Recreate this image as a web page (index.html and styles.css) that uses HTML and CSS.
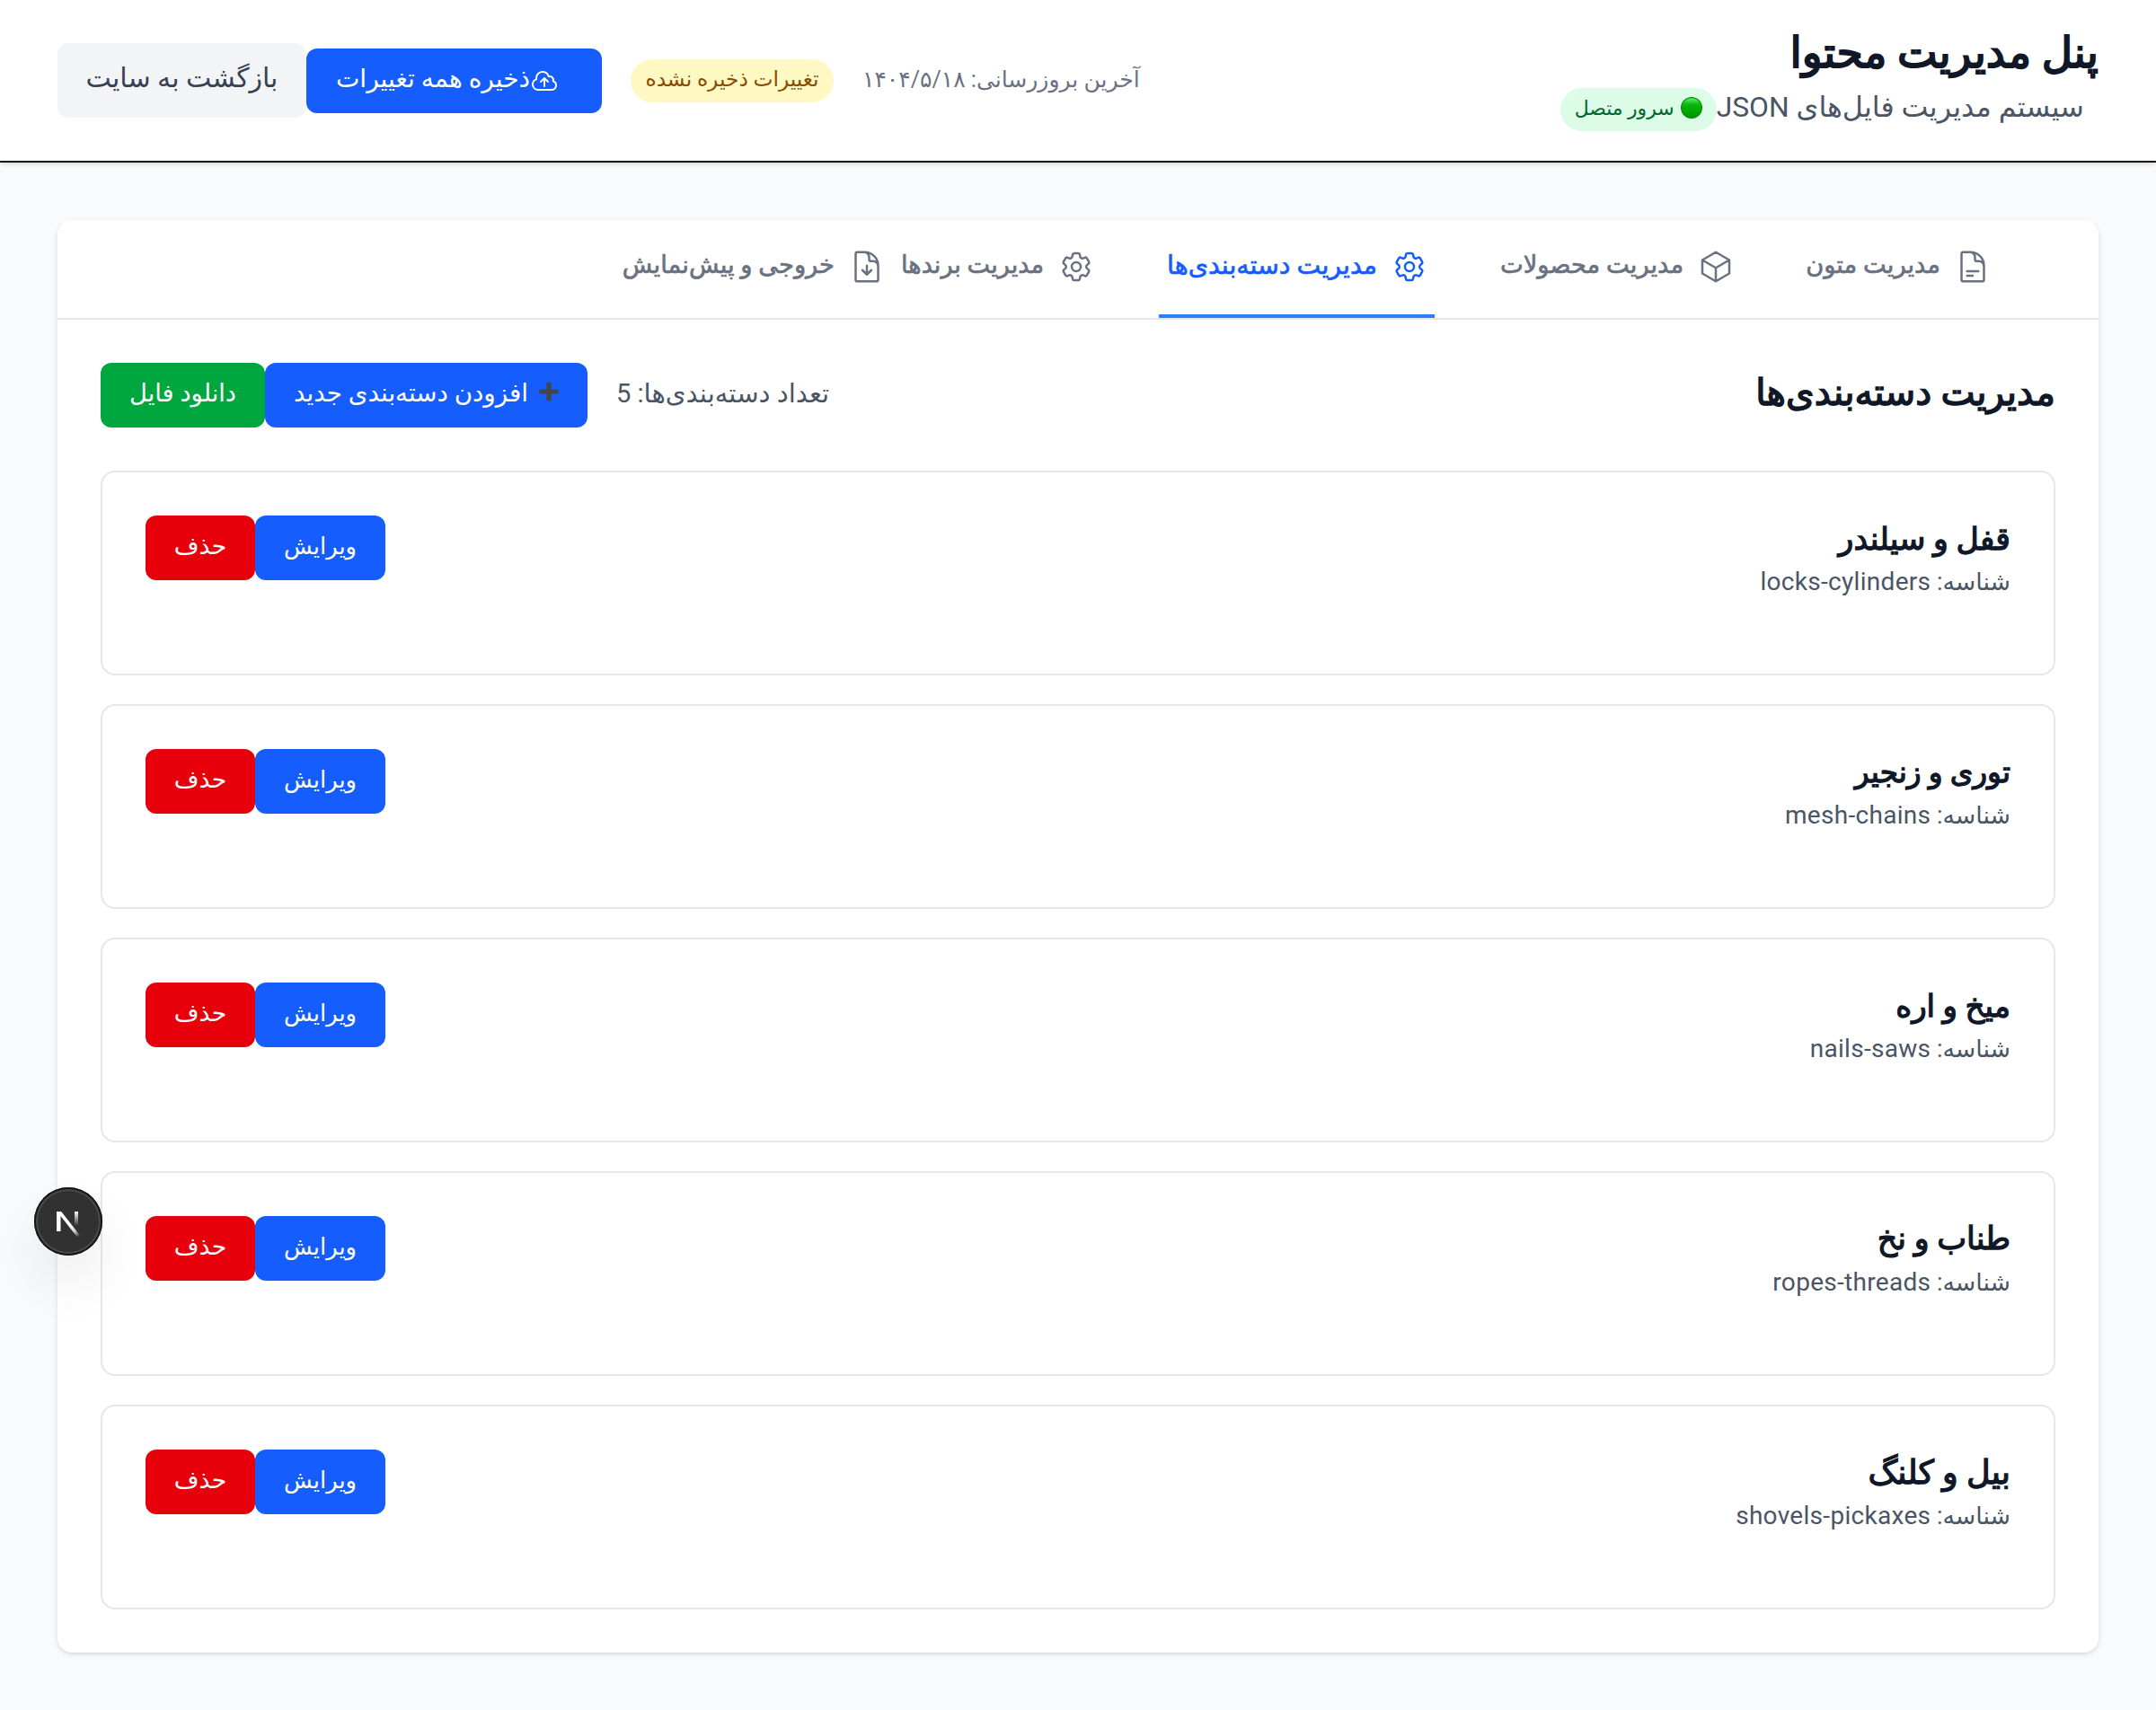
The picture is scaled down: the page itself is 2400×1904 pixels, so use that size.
FILE: index.html
```html
<!DOCTYPE html>
<html lang="fa" dir="rtl">
<head>
<meta charset="utf-8">
<title>پنل مدیریت محتوا</title>
<link rel="stylesheet" href="styles.css">
</head>
<body>
<svg class="sprite" aria-hidden="true">
  <symbol id="i-doc" viewBox="0 0 24 24"><path d="M19.5 14.25v-2.625a3.375 3.375 0 0 0-3.375-3.375h-1.5A1.125 1.125 0 0 1 13.5 7.125v-1.5a3.375 3.375 0 0 0-3.375-3.375H8.25m0 12.75h7.5m-7.5 3H12M10.5 2.25H5.625c-.621 0-1.125.504-1.125 1.125v17.25c0 .621.504 1.125 1.125 1.125h12.75c.621 0 1.125-.504 1.125-1.125V11.25a9 9 0 0 0-9-9Z"/></symbol>
  <symbol id="i-cube" viewBox="0 0 24 24"><path d="m21 7.5-9-5.25L3 7.5m18 0-9 5.25m9-5.25v9l-9 5.25M3 7.5l9 5.25M3 7.5v9l9 5.25m0-9v9"/></symbol>
  <symbol id="i-cog" viewBox="0 0 24 24"><path d="M9.594 3.94c.09-.542.56-.94 1.11-.94h2.593c.55 0 1.02.398 1.11.94l.213 1.281c.063.374.313.686.645.87.074.04.147.083.22.127.325.196.72.257 1.075.124l1.217-.456a1.125 1.125 0 0 1 1.37.49l1.296 2.247a1.125 1.125 0 0 1-.26 1.431l-1.003.827c-.293.241-.438.613-.43.992a7.723 7.723 0 0 1 0 .255c-.008.378.137.75.43.991l1.004.827c.424.35.534.955.26 1.43l-1.298 2.247a1.125 1.125 0 0 1-1.369.491l-1.217-.456c-.355-.133-.75-.072-1.076.124a6.47 6.47 0 0 1-.22.128c-.331.183-.581.495-.644.869l-.213 1.281c-.09.543-.56.94-1.11.94h-2.594c-.55 0-1.019-.398-1.11-.94l-.213-1.281c-.062-.374-.312-.686-.644-.87a6.52 6.52 0 0 1-.22-.127c-.325-.196-.72-.257-1.076-.124l-1.217.456a1.125 1.125 0 0 1-1.369-.49l-1.297-2.247a1.125 1.125 0 0 1 .26-1.431l1.004-.827c.292-.24.437-.613.43-.991a6.932 6.932 0 0 1 0-.255c.007-.38-.138-.751-.43-.992l-1.004-.827a1.125 1.125 0 0 1-.26-1.43l1.297-2.247a1.125 1.125 0 0 1 1.37-.491l1.216.456c.356.133.751.072 1.076-.124.072-.044.146-.086.22-.128.332-.183.582-.495.644-.869l.214-1.28Z"/><path d="M15 12a3 3 0 1 1-6 0 3 3 0 0 1 6 0Z"/></symbol>
  <symbol id="i-export" viewBox="0 0 24 24"><path d="M19.5 14.25v-2.625a3.375 3.375 0 0 0-3.375-3.375h-1.5A1.125 1.125 0 0 1 13.5 7.125v-1.5a3.375 3.375 0 0 0-3.375-3.375H8.25m.75 12 3 3m0 0 3-3m-3 3v-6m-1.5-9H5.625c-.621 0-1.125.504-1.125 1.125v17.25c0 .621.504 1.125 1.125 1.125h12.75c.621 0 1.125-.504 1.125-1.125V11.25a9 9 0 0 0-9-9Z"/></symbol>
  <symbol id="i-cloud" viewBox="0 0 24 24"><path d="M12 16.5V9.75m0 0 3 3m-3-3-3 3M6.75 19.5a4.5 4.5 0 0 1-1.41-8.775 5.25 5.25 0 0 1 10.233-2.33 3 3 0 0 1 3.758 3.848A3.752 3.752 0 0 1 18 19.5H6.75Z"/></symbol>
</svg>

<header class="topbar">
  <div class="brand">
    <h1 class="brand-title">پنل مدیریت محتوا</h1>
    <div class="brand-row">
      <p class="brand-sub">سیستم مدیریت فایل‌های JSON</p>
      <span class="badge badge-ok"><svg class="status-dot" viewBox="0 0 24 24" role="img" aria-label="متصل"><defs><linearGradient id="dot" x1="0" y1="0" x2="0" y2="1"><stop offset="0" stop-color="#5f6"/><stop offset=".35" stop-color="#0db40d"/><stop offset=".65" stop-color="#00aa00"/><stop offset="1" stop-color="#009400"/></linearGradient></defs><circle cx="12" cy="12" r="11.4" fill="url(#dot)" stroke="#078a0c" stroke-width="1.2"/></svg><span>سرور متصل</span></span>
    </div>
  </div>
  <div class="actions">
    <span class="updated">آخرین بروزرسانی: ۱۴۰۴/۵/۱۸</span>
    <span class="badge badge-warn">تغییرات ذخیره نشده</span>
    <div class="buttons">
      <button class="btn btn-blue btn-save"><svg class="icon"><use href="#i-cloud"/></svg><span>ذخیره همه تغییرات</span></button>
      <a class="btn btn-back">بازگشت به سایت</a>
    </div>
  </div>
</header>

<main class="panel">
  <nav class="tabs">
    <button class="tab tab-texts"><svg class="icon"><use href="#i-doc"/></svg><span>مدیریت متون</span></button>
    <button class="tab tab-products"><svg class="icon"><use href="#i-cube"/></svg><span>مدیریت محصولات</span></button>
    <button class="tab tab-categories active"><svg class="icon"><use href="#i-cog"/></svg><span>مدیریت دسته‌بندی‌ها</span></button>
    <button class="tab tab-brands"><svg class="icon"><use href="#i-cog"/></svg><span>مدیریت برندها</span></button>
    <button class="tab tab-export"><svg class="icon"><use href="#i-export"/></svg><span>خروجی و پیش‌نمایش</span></button>
  </nav>
  <section class="content">
    <div class="section-head">
      <h2 class="section-title">مدیریت دسته‌بندی‌ها</h2>
      <div class="actions">
        <span class="count">تعداد دسته‌بندی‌ها: 5</span>
        <div class="buttons">
          <button class="btn btn-blue btn-add"><svg class="plus" viewBox="0 0 22 24" role="img" aria-label="➕"><path d="M8.5 1.500h5v8h8v5h-8v8h-5v-8h-8v-5h8z"/></svg><span>افزودن دسته‌بندی جدید</span></button>
          <button class="btn btn-green">دانلود فایل</button>
        </div>
      </div>
    </div>
    <div class="list">
      <article class="card"><div><h3 class="card-title t-locks">قفل و سیلندر</h3><p class="card-id">شناسه: <span>locks-cylinders</span></p></div><div class="buttons"><button class="btn btn-blue btn-edit">ویرایش</button><button class="btn btn-red">حذف</button></div></article>
      <article class="card"><div><h3 class="card-title t-mesh">توری و زنجیر</h3><p class="card-id">شناسه: <span>mesh-chains</span></p></div><div class="buttons"><button class="btn btn-blue btn-edit">ویرایش</button><button class="btn btn-red">حذف</button></div></article>
      <article class="card"><div><h3 class="card-title t-nails">میخ و اره</h3><p class="card-id">شناسه: <span>nails-saws</span></p></div><div class="buttons"><button class="btn btn-blue btn-edit">ویرایش</button><button class="btn btn-red">حذف</button></div></article>
      <article class="card"><div><h3 class="card-title t-ropes">طناب و نخ</h3><p class="card-id">شناسه: <span>ropes-threads</span></p></div><div class="buttons"><button class="btn btn-blue btn-edit">ویرایش</button><button class="btn btn-red">حذف</button></div></article>
      <article class="card"><div><h3 class="card-title t-shovels">بیل و کلنگ</h3><p class="card-id">شناسه: <span>shovels-pickaxes</span></p></div><div class="buttons"><button class="btn btn-blue btn-edit">ویرایش</button><button class="btn btn-red">حذف</button></div></article>
    </div>
  </section>
</main>

<button class="devtools" aria-label="Next.js">
  <svg viewBox="0 0 40 40" width="40" height="40">
    <defs>
      <linearGradient id="n1" gradientUnits="userSpaceOnUse" x1="22" y1="24" x2="32" y2="37"><stop stop-color="#fff"/><stop offset=".5" stop-color="#fff" stop-opacity=".8"/><stop offset="1" stop-color="#fff" stop-opacity="0"/></linearGradient>
      <linearGradient id="n2" gradientUnits="userSpaceOnUse" x1="0" y1="9" x2="0" y2="25"><stop stop-color="#fff"/><stop offset="1" stop-color="#fff" stop-opacity="0"/></linearGradient>
    </defs>
    <path d="M7 31V9h5.200L33 35.500l-3 2L11.500 14V31z" fill="url(#n1)"/>
    <path d="M27 9h4v16h-4z" fill="url(#n2)"/>
  </svg>
</button>
</body>
</html>
```
FILE: styles.css
```css
* { box-sizing: border-box; margin: 0; padding: 0; }
body {
  min-height: 1904px;
  background: #f9fafb;
  color: #101828;
  font-family: Roboto, "DejaVu Sans", sans-serif;
  font-size: 28px;
  overflow: hidden;
}
button { border: 0; background: none; font: inherit; color: inherit; }
.sprite { display: none; }
.icon {
  flex: none;
  width: 40px;
  height: 40px;
  fill: none;
  stroke: currentColor;
  stroke-width: 1.5;
  stroke-linecap: round;
  stroke-linejoin: round;
}

/* Header */
.topbar {
  display: flex;
  align-items: center;
  justify-content: space-between;
  height: 181px;
  padding: 0 64px;
  background: #fff;
  border-bottom: 2px solid #171717;
  box-shadow: 0 2px 6px rgba(0, 0, 0, .1), 0 2px 4px -2px rgba(0, 0, 0, .1);
}
.brand { padding-bottom: 6px; }
.brand-title { font-size: 47.3px; line-height: 64px; font-weight: 400; -webkit-text-stroke: 2px currentColor; white-space: nowrap; }
.brand-row { display: flex; align-items: center; height: 48px; margin: 7px 16px 0 0; }
.brand-sub { padding-bottom: 6px; color: #4a5565; font-size: 31.8px; line-height: 40px; white-space: nowrap; }
.badge {
  display: flex;
  align-items: center;
  justify-content: center;
  height: 48px;
  border-radius: 24px;
  line-height: 32px;
  white-space: nowrap;
}
.badge-ok { width: 174px; gap: 7px; padding-bottom: 4px; background: #dcfce7; color: #016630; font-size: 21.9px; }
.badge-ok span { padding-top: 2px; }
.badge-warn { width: 226px; padding-bottom: 4px; background: #fef9c2; color: #894b00; font-size: 23.3px; }
.status-dot { width: 24px; height: 24px; }
.actions { display: flex; align-items: center; gap: 32px; }
.updated { padding-bottom: 2px; color: #6a7282; font-size: 25px; line-height: 40px; white-space: nowrap; }
.buttons { display: flex; align-items: center; }

.btn {
  display: flex;
  align-items: center;
  justify-content: center;
  height: 72px;
  padding-bottom: 5px;
  border-radius: 12px;
  color: #fff;
  line-height: 40px;
  white-space: nowrap;
}
.btn-blue { background: #155dfc; }
.btn-green { width: 183px; background: #00a63e; font-size: 27.3px; }
.btn-red { width: 122px; padding-bottom: 4px; background: #e7000b; font-size: 26.8px; }
.btn-save { justify-content: flex-start; width: 329px; padding-right: 48px; padding-bottom: 0; }
.btn-save .icon { width: 32px; height: 32px; }
.btn-save span { padding-bottom: 4px; }
.btn-back { width: 277px; height: 83px; background: #f3f4f6; color: #364153; font-size: 30px; }
.btn-add { gap: 12px; width: 359px; font-size: 27.7px; }
.btn-edit { width: 145px; padding-bottom: 4px; font-size: 25.8px; }
.plus { width: 22px; height: 24px; margin-bottom: 4px; fill: #464646; }

/* Panel */
.panel {
  height: 1595px;
  margin: 64px 64px 0;
  background: #fff;
  border-radius: 16px;
  box-shadow: 0 2px 6px rgba(0, 0, 0, .1), 0 2px 4px -2px rgba(0, 0, 0, .1);
}
.tabs { display: flex; height: 111px; padding-right: 112px; border-bottom: 2px solid #e5e7eb; }
.tab {
  display: flex;
  align-items: center;
  gap: 16px;
  height: 109px;
  margin-left: 64px;
  padding: 0 8px 1px;
  border-bottom: 4px solid transparent;
  color: #6a7282;
  white-space: nowrap;
}
.tab span { padding-bottom: 4px; -webkit-text-stroke: .7px currentColor; }
.tab.active { border-color: #2b7fff; color: #155dfc; }
.tab-texts { width: 222px; font-size: 27.3px; }
.tab-products { width: 277px; font-size: 27.3px; }
.tab-categories { width: 307px; font-size: 28.4px; }
.tab-brands { width: 233px; margin-left: 0; font-size: 27.1px; }
.tab-export { margin-left: 0; font-size: 27.3px; }

.content { padding: 48px; }
.section-head { display: flex; align-items: center; justify-content: space-between; height: 72px; margin-bottom: 48px; }
.section-title { padding-bottom: 6px; font-size: 40.5px; line-height: 56px; font-weight: 400; -webkit-text-stroke: 1.5px currentColor; white-space: nowrap; }
.count { padding-bottom: 5px; color: #4a5565; font-size: 29.1px; line-height: 40px; white-space: nowrap; }

.list { display: flex; flex-direction: column; gap: 32px; }
.card {
  display: flex;
  align-items: flex-start;
  justify-content: space-between;
  height: 228px;
  padding: 48px;
  border: 2px solid #e5e7eb;
  border-radius: 16px;
}
.card-title { font-weight: 400; -webkit-text-stroke: 1.3px currentColor; line-height: 52px; white-space: nowrap; }
.card-id { padding-top: 1px; color: #4a5565; font-size: 26.8px; line-height: 42px; white-space: nowrap; }
.card-id span { font-size: 28px; letter-spacing: .3px; }
.t-locks { font-size: 34.8px; }
.t-mesh { font-size: 32.7px; }
.t-nails { font-size: 34.1px; }
.t-ropes { font-size: 34.9px; }
.t-shovels { font-size: 36.7px; }

/* Floating badge pinned over the page */
.devtools {
  position: absolute;
  left: 38px;
  top: 1322px;
  display: grid;
  place-items: center;
  width: 76px;
  height: 76px;
  border-radius: 50%;
  background: #313131;
  box-shadow: inset 0 0 0 2px #171717, inset 0 0 0 4px #4a4a4a, 0 32px 64px -8px rgba(0, 0, 0, .12);
}
```
